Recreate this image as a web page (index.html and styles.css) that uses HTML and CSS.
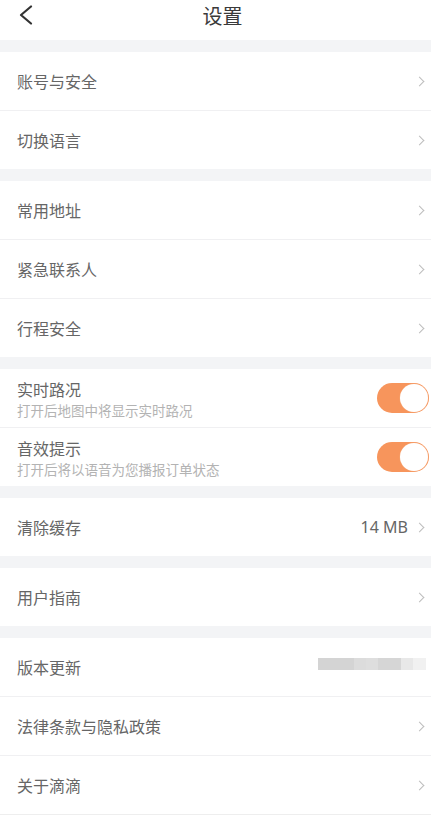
FILE: index.html
```html
<!DOCTYPE html>
<html lang="zh-CN">
<head>
<meta charset="utf-8">
<title>设置</title>
<link rel="stylesheet" href="styles.css">
</head>
<body>
<div class="page">
  <header class="topbar">
    <span class="back">
      <svg width="14" height="20" viewBox="0 0 14 20"><polyline points="12,1.5 2,10 12,18.5" fill="none" stroke="#333" stroke-width="2.2" stroke-linecap="round" stroke-linejoin="round"/></svg>
    </span>
    <h1 class="title">设置</h1>
  </header>

  <div class="band"></div>
  <section class="group">
    <div class="row"><span class="label">账号与安全</span><span class="chev"></span></div>
    <div class="row"><span class="label">切换语言</span><span class="chev"></span></div>
  </section>

  <div class="band"></div>
  <section class="group">
    <div class="row"><span class="label">常用地址</span><span class="chev"></span></div>
    <div class="row"><span class="label">紧急联系人</span><span class="chev"></span></div>
    <div class="row"><span class="label">行程安全</span><span class="chev"></span></div>
  </section>

  <div class="band"></div>
  <section class="group">
    <div class="row toggle-row">
      <div class="texts"><span class="label">实时路况</span><span class="sub">打开后地图中将显示实时路况</span></div>
      <span class="switch"><span class="knob"></span></span>
    </div>
    <div class="row toggle-row">
      <div class="texts"><span class="label">音效提示</span><span class="sub">打开后将以语音为您播报订单状态</span></div>
      <span class="switch"><span class="knob"></span></span>
    </div>
  </section>

  <div class="band"></div>
  <section class="group">
    <div class="row"><span class="label">清除缓存</span><span class="right"><span class="value">14 MB</span><span class="chev"></span></span></div>
  </section>

  <div class="band"></div>
  <section class="group">
    <div class="row"><span class="label">用户指南</span><span class="chev"></span></div>
  </section>

  <div class="band"></div>
  <section class="group">
    <div class="row"><span class="label">版本更新</span>
      <span class="mosaic">
        <span class="m m1"></span><span class="m m2"></span><span class="m m3"></span><span class="m m4"></span><span class="m m5"></span><span class="m m6"></span>
      </span>
    </div>
    <div class="row"><span class="label">法律条款与隐私政策</span><span class="chev"></span></div>
    <div class="row"><span class="label">关于滴滴</span><span class="chev"></span></div>
  </section>
</div>
</body>
</html>
```
FILE: styles.css
```css
html, body {
  margin: 0;
  padding: 0;
  background: #ffffff;
}
body {
  font-family: "Noto Sans CJK SC", "Noto Sans", "Liberation Sans", sans-serif;
  color: #666666;
}
.page {
  width: 431px;
  height: 815px;
  overflow: hidden;
  background: #ffffff;
}
.topbar {
  height: 40px;
  position: relative;
  display: flex;
  align-items: center;
  justify-content: center;
}
.back {
  position: absolute;
  left: 19px;
  top: 5px;
  width: 14px;
  height: 20px;
  display: block;
}
.back svg { display: block; }
.title {
  margin: 0;
  font-size: 20px;
  font-weight: 400;
  color: #3a3a3a;
  line-height: 20px;
  margin-top: -8px;
  padding-left: 14px;
}
.band {
  height: 12px;
  background: #f3f4f6;
}
.group {
  background: #ffffff;
}
.row {
  height: 58px;
  display: flex;
  align-items: center;
  justify-content: space-between;
  padding: 0 5px 0 17px;
  border-bottom: 1px solid #f0f0f2;
}
.row:last-child {
  border-bottom: none;
}
.group:last-child .row:last-child {
  border-bottom: 1px solid #eeeeee;
}
.label {
  font-size: 16px;
  line-height: 20px;
  color: #666666;
}
.chev {
  width: 6px;
  height: 6px;
  border-top: 1.2px solid #bdbdbd;
  border-right: 1.2px solid #bdbdbd;
  transform: rotate(45deg);
  margin-right: 3px;
}
.right {
  display: flex;
  align-items: center;
}
.value {
  font-size: 16px;
  color: #666666;
  margin-right: 8px;
  font-family: "Noto Sans", "Liberation Sans", sans-serif;
}
.toggle-row {
  padding-right: 2px;
}
.texts {
  display: flex;
  flex-direction: column;
  padding-top: 2px;
}
.sub {
  font-size: 13.5px;
  line-height: 18px;
  color: #b3b3b3;
  margin-top: 2px;
}
.switch {
  width: 52px;
  height: 30px;
  border-radius: 15px;
  background: #f7955c;
  position: relative;
  display: block;
  flex: none;
}
.knob {
  position: absolute;
  right: 1px;
  top: 1px;
  width: 28px;
  height: 28px;
  border-radius: 50%;
  background: #ffffff;
  box-shadow: 0 0 0 0.5px #f4a474;
}
.mosaic {
  display: flex;
  height: 12px;
  margin-top: -6px;
}
.m { display: block; height: 12px; }
.m1 { width: 36px; background: #d4d4d4; }
.m2 { width: 12px; background: #dcdcdc; }
.m3 { width: 12px; background: #dedede; }
.m4 { width: 23px; background: #d6d6d6; }
.m5 { width: 12px; background: #e8e8e8; }
.m6 { width: 13px; background: #f1f1f1; }
```
